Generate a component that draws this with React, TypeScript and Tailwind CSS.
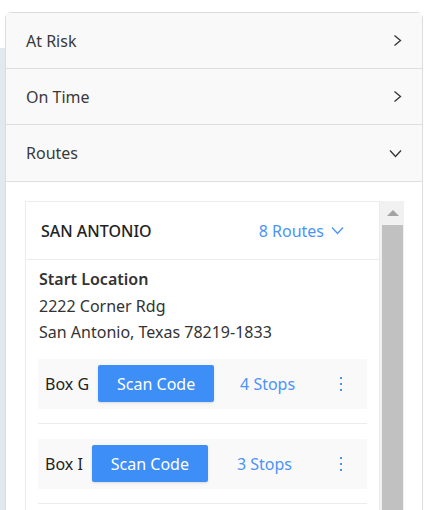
import React from 'react';

const font = { fontFamily: '"Noto Sans", "Open Sans", sans-serif' };

const ChevronRight = () => (
    <svg width="9" height="13" viewBox="0 0 9 13" fill="none">
        <path d="M1.5 1.5 L7.5 6.5 L1.5 11.5" stroke="#333" strokeWidth="1.3" />
    </svg>
);

const ChevronDown = ({ color = '#333', w = 13 }: { color?: string; w?: number }) => (
    <svg width={w} height="9" viewBox="0 0 13 9" fill="none">
        <path d="M1 1.5 L6.5 7.5 L12 1.5" stroke={color} strokeWidth="1.3" />
    </svg>
);

const Kebab = () => (
    <svg width="4" height="16" viewBox="0 0 4 16" fill="#4b94f6">
        <rect x="1" y="1" width="2" height="2" />
        <rect x="1" y="7" width="2" height="2" />
        <rect x="1" y="13" width="2" height="2" />
    </svg>
);

const boxes = [
    { name: 'Box G', stops: 4 },
    { name: 'Box I', stops: 3 },
];

const Header = ({ label, open }: { label: string; open?: boolean }) => (
    <div className="flex h-[56px] items-center justify-between border-b border-[#dedede] bg-[#f9f9f9] pl-5 pr-[20px] text-[16px] text-[#3a3a3a]">
        <span>{label}</span>
        {open ? <ChevronDown /> : <ChevronRight />}
    </div>
);

export default function App() {
    return (
        <div className="flex h-[510px] overflow-hidden bg-white pt-3" style={font}>
            <div className="mt-[36px] w-[5px] shrink-0 bg-[#e2e8eb]" />
            <div className="mr-[1px] flex-1 rounded-t-md border border-b-0 border-[#dcdcdc]">
                <Header label="At Risk" />
                <Header label="On Time" />
                <div className="flex h-[57px] items-center justify-between border-b border-[#dedede] bg-[#f9f9f9] pl-5 pr-[20px] text-[16px] text-[#3a3a3a]">
                    <span>Routes</span>
                    <ChevronDown />
                </div>
                <div className="flex pl-[19px] pr-[18px] pt-[19px]">
                    <div className="flex-1 border border-b-0 border-[#ececec]">
                        <div className="flex h-[58px] items-center justify-between border-b border-[#ececec] pl-[15px] pr-[35px]">
                            <span className="text-[16px] font-medium text-[#222]">SAN ANTONIO</span>
                            <span className="flex items-center gap-[7px] text-[16px] text-[#4b94f6]">
                                8 Routes
                                <ChevronDown color="#4b94f6" w={13} />
                            </span>
                        </div>
                        <div className="px-[13px] pt-[6px] text-[16px] leading-[26.5px] text-[#333]">
                            <div className="font-semibold">Start Location</div>
                            <div>2222 Corner Rdg</div>
                            <div>San Antonio, Texas 78219-1833</div>
                        </div>
                        <div className="px-3 pt-[13px]">
                            {boxes.map((b) => (
                                <div key={b.name} className="border-b border-[#ececec] pb-[14px] pt-[15px] first:pt-0">
                                    <div className="flex h-[50px] items-center bg-[#f9f9f9] pl-[7px] pr-[6px]">
                                        <span className="text-[16px] text-[#222]">{b.name}</span>
                                        <button className="ml-[9px] h-[37px] rounded-[2px] bg-[#3e8ef7] px-[19px] text-[16px] text-white shadow-sm">
                                            Scan Code
                                        </button>
                                        <span className="flex-1 text-center text-[16px] text-[#4b94f6]">
                                            {b.stops} Stops
                                        </span>
                                        <span className="flex w-[40px] justify-center">
                                            <Kebab />
                                        </span>
                                    </div>
                                </div>
                            ))}
                        </div>
                    </div>
                    <div className="flex h-[400px] w-[24px] flex-col bg-[#f1f1f1] pl-[2px] pr-[1px]">
                        <div className="flex h-[24px] items-center justify-center">
                            <div className="h-0 w-0 border-x-[6px] border-b-[6px] border-x-transparent border-b-[#a3a3a3]" />
                        </div>
                        <div className="flex-1 bg-[#c1c1c1]" />
                    </div>
                </div>
            </div>
        </div>
    );
}
